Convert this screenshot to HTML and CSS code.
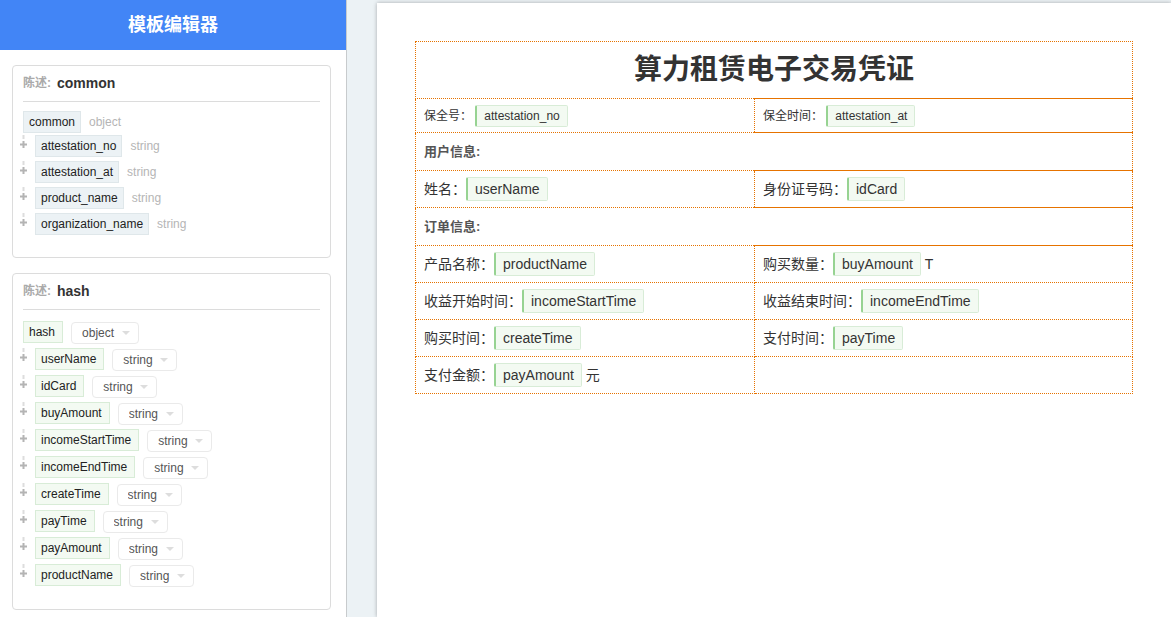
FILE: index.html
```html
<!DOCTYPE html>
<html lang="zh-CN">
<head>
<meta charset="utf-8">
<title>模板编辑器</title>
<link rel="stylesheet" href="styles.css">
</head>
<body>
<svg class="symbols">
  <symbol id="handle" viewBox="0 0 7 13">
    <path d="M2.5 0h2v4h-2z" fill="#ddd"/>
    <path d="M2.5 6h2v2.5H7v2H4.5V13h-2v-2.5H0v-2h2.5z" fill="#b4b4b4"/>
  </symbol>
</svg>
<div class="app">
  <aside class="sidebar">
    <h1 class="brand">模板编辑器</h1>
    <div class="panels">
      <section class="panel">
        <h2 class="panel-head"><span class="panel-label">陈述:</span>common</h2>
        <ul class="tree tree-fixed">
          <li class="node root"><span class="key">common</span><span class="type">object</span></li>
          <li class="node"><svg class="handle"><use href="#handle"/></svg><span class="key">attestation_no</span><span class="type">string</span></li>
          <li class="node"><svg class="handle"><use href="#handle"/></svg><span class="key">attestation_at</span><span class="type">string</span></li>
          <li class="node"><svg class="handle"><use href="#handle"/></svg><span class="key">product_name</span><span class="type">string</span></li>
          <li class="node"><svg class="handle"><use href="#handle"/></svg><span class="key">organization_name</span><span class="type">string</span></li>
        </ul>
      </section>
      <section class="panel">
        <h2 class="panel-head"><span class="panel-label">陈述:</span>hash</h2>
        <ul class="tree tree-editable">
          <li class="node root"><label class="key" for="t0">hash</label><span class="picker"><select id="t0"><option>object</option></select></span></li>
          <li class="node"><svg class="handle"><use href="#handle"/></svg><label class="key" for="t1">userName</label><span class="picker"><select id="t1"><option>string</option></select></span></li>
          <li class="node"><svg class="handle"><use href="#handle"/></svg><label class="key" for="t2">idCard</label><span class="picker"><select id="t2"><option>string</option></select></span></li>
          <li class="node"><svg class="handle"><use href="#handle"/></svg><label class="key" for="t3">buyAmount</label><span class="picker"><select id="t3"><option>string</option></select></span></li>
          <li class="node"><svg class="handle"><use href="#handle"/></svg><label class="key" for="t4">incomeStartTime</label><span class="picker"><select id="t4"><option>string</option></select></span></li>
          <li class="node"><svg class="handle"><use href="#handle"/></svg><label class="key" for="t5">incomeEndTime</label><span class="picker"><select id="t5"><option>string</option></select></span></li>
          <li class="node"><svg class="handle"><use href="#handle"/></svg><label class="key" for="t6">createTime</label><span class="picker"><select id="t6"><option>string</option></select></span></li>
          <li class="node"><svg class="handle"><use href="#handle"/></svg><label class="key" for="t7">payTime</label><span class="picker"><select id="t7"><option>string</option></select></span></li>
          <li class="node"><svg class="handle"><use href="#handle"/></svg><label class="key" for="t8">payAmount</label><span class="picker"><select id="t8"><option>string</option></select></span></li>
          <li class="node"><svg class="handle"><use href="#handle"/></svg><label class="key" for="t9">productName</label><span class="picker"><select id="t9"><option>string</option></select></span></li>
        </ul>
      </section>
    </div>
  </aside>
  <main class="workspace">
    <article class="paper">
      <table class="voucher">
        <colgroup><col class="col-left"><col></colgroup>
        <tbody>
          <tr class="title-row"><th colspan="2">算力租赁电子交易凭证</th></tr>
          <tr class="meta-row"><td>保全号： <span class="field">attestation_no</span></td><td class="ruled">保全时间： <span class="field">attestation_at</span></td></tr>
          <tr class="group-row"><th colspan="2">用户信息:</th></tr>
          <tr><td>姓名：<span class="field">userName</span></td><td class="ruled">身份证号码：<span class="field">idCard</span></td></tr>
          <tr class="group-row"><th colspan="2">订单信息:</th></tr>
          <tr><td>产品名称：<span class="field">productName</span></td><td class="ruled-top">购买数量：<span class="field">buyAmount</span> T</td></tr>
          <tr><td>收益开始时间：<span class="field">incomeStartTime</span></td><td>收益结束时间：<span class="field">incomeEndTime</span></td></tr>
          <tr><td>购买时间：<span class="field">createTime</span></td><td>支付时间：<span class="field">payTime</span></td></tr>
          <tr><td>支付金额：<span class="field">payAmount</span> 元</td><td></td></tr>
        </tbody>
      </table>
    </article>
  </main>
</div>
</body>
</html>
```

FILE: styles.css
```css
* { box-sizing: border-box; }

body {
  margin: 0;
  background: #ecf2f5;
  color: #333;
  font: 12px/20px "Liberation Sans", "Noto Sans CJK SC", sans-serif;
}

.symbols { display: none; }

.app {
  display: flex;
  min-height: 100vh;
}

/* Sidebar */
.sidebar {
  flex: 0 0 347px;
  background: #fff;
  border-right: 1px solid #c8cbcd;
}

.brand {
  margin: 0;
  background: #4285f6;
  color: #fff;
  font-size: 18px;
  line-height: 50px;
  text-align: center;
}

.panels {
  display: grid;
  gap: 15px;
  padding: 15px 15px 7px 12px;
}

.panel {
  padding: 0 10px 18px;
  border: 1px solid #dcdcdc;
  border-radius: 4px;
}

.panel-head {
  display: flex;
  gap: 6px;
  margin: 0;
  border-bottom: 1px solid #dcdcdc;
  font-size: 14px;
  line-height: 35px;
}

.panel-label {
  color: #aaa;
  font-size: 12px;
  font-weight: 700;
}

.tree {
  margin: 0;
  padding: 0;
  list-style: none;
}

.tree-fixed { padding-top: 9px; }
.tree-editable { padding-top: 11px; }

.node {
  display: flex;
  align-items: flex-start;
  gap: 8px;
  height: 27px;
  margin-left: -3px;
}

.tree-fixed .node { height: 26px; }
.tree-fixed .root { height: 24px; }
.node.root { margin-left: 0; }

.handle {
  width: 7px;
  height: 13px;
}

.key {
  padding: 0 5px;
  border: 1px solid #dfe7ea;
  background: #ecf2f5;
  color: #222;
}

.tree-editable .key {
  padding-right: 7px;
  border-color: #d8ecd7;
  background: #f3faf2;
}

.type {
  color: #b5b5b5;
  line-height: 22px;
}

.picker {
  position: relative;
  margin-top: 1px;
}

.picker::after {
  position: absolute;
  top: 9px;
  right: 9px;
  border: 4px solid transparent;
  border-top-color: #ddd;
  border-bottom: 0;
  content: "";
  pointer-events: none;
}

.picker select {
  display: block;
  height: 22px;
  padding: 0 23px 0 10px;
  border: 1px solid #eaeaea;
  border-radius: 4px;
  background: #fff;
  color: #555;
  font: inherit;
  appearance: none;
}

/* Document */
.workspace {
  flex: 1;
  display: flex;
  padding: 3px 0 0 30px;
}

.paper {
  flex: 1;
  padding: 38px;
  background: #fff;
  box-shadow: 0 0 4px rgba(0, 0, 0, 0.3);
}

.voucher {
  width: 100%;
  border-collapse: collapse;
  table-layout: fixed;
  font-size: 14px;
}

.col-left { width: 339px; }

.voucher tr { height: 37px; }
.voucher .title-row { height: 57px; }
.voucher .meta-row { height: 34px; }
.voucher .group-row { height: 38px; }

.voucher td,
.voucher th {
  padding: 0 8px;
  border: 1px dotted #e67300;
  text-align: left;
  white-space: nowrap;
}

.voucher .title-row th {
  font-size: 28px;
  line-height: 40px;
  text-align: center;
}

.voucher .meta-row td { font-size: 12px; }

.voucher .group-row th {
  color: #555;
  font-size: 13px;
}

.voucher .ruled {
  border-top-style: solid;
  border-bottom-style: solid;
}

.voucher .ruled-top { border-top-style: solid; }

.field {
  display: inline-block;
  padding: 0 7px;
  border: 1px solid #d8ecd7;
  border-left: 2px solid #97d392;
  border-radius: 2px;
  background: #f3faf2;
  line-height: 22px;
}

.meta-row .field { line-height: 20px; }
```
